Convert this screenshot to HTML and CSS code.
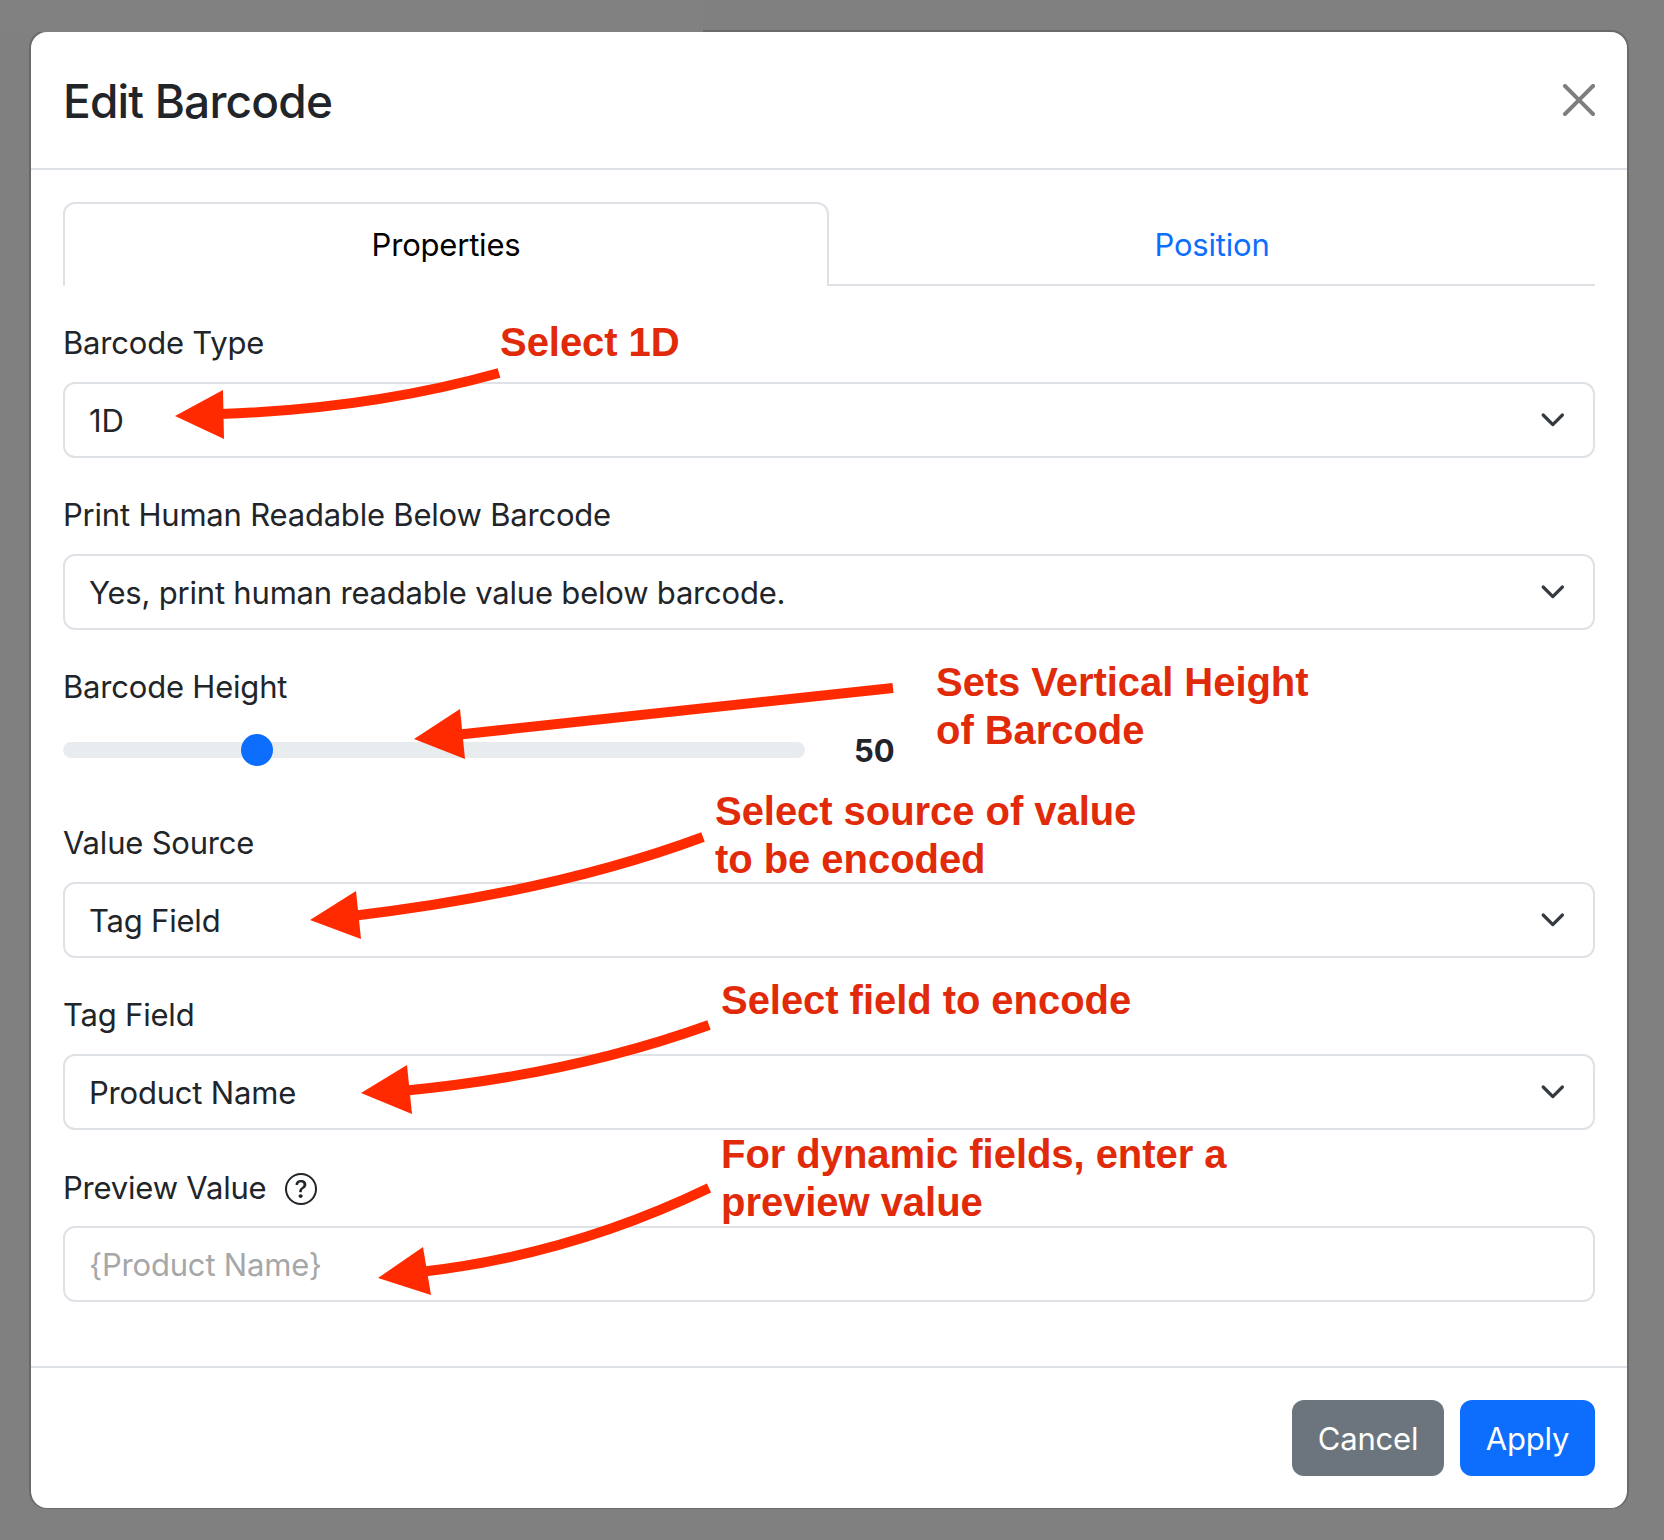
FILE: index.html
```html
<!DOCTYPE html>
<html lang="en">
<head>
<meta charset="utf-8">
<title>Edit Barcode</title>
<link rel="stylesheet" href="styles.css">
</head>
<body>
<div class="modal">
  <header class="modal-header">
    <h1 class="modal-title">Edit Barcode</h1>
    <svg class="close" viewBox="0 0 16 16" aria-label="Close"><path d="M.293.293a1 1 0 0 1 1.414 0L8 6.586 14.293.293a1 1 0 1 1 1.414 1.414L9.414 8l6.293 6.293a1 1 0 0 1-1.414 1.414L8 9.414l-6.293 6.293a1 1 0 0 1-1.414-1.414L6.586 8 .293 1.707a1 1 0 0 1 0-1.414z"/></svg>
  </header>
  <main class="modal-body">
    <nav class="tabs">
      <div class="tab tab-active">Properties</div>
      <div class="tab tab-link">Position</div>
    </nav>
    <div class="form">
      <div class="group">
        <label class="label">Barcode Type</label>
        <div class="select"><span>1D</span><svg class="chevron" viewBox="0 0 16 16"><path d="M2 5l6 6 6-6"/></svg></div>
      </div>
      <div class="group">
        <label class="label">Print Human Readable Below Barcode</label>
        <div class="select"><span>Yes, print human readable value below barcode.</span><svg class="chevron" viewBox="0 0 16 16"><path d="M2 5l6 6 6-6"/></svg></div>
      </div>
      <div class="group">
        <label class="label">Barcode Height</label>
        <div class="slider-row">
          <div class="track"><div class="thumb"></div></div>
          <output class="slider-value">50</output>
        </div>
      </div>
      <div class="group">
        <label class="label">Value Source</label>
        <div class="select"><span>Tag Field</span><svg class="chevron" viewBox="0 0 16 16"><path d="M2 5l6 6 6-6"/></svg></div>
      </div>
      <div class="group">
        <label class="label">Tag Field</label>
        <div class="select"><span>Product Name</span><svg class="chevron" viewBox="0 0 16 16"><path d="M2 5l6 6 6-6"/></svg></div>
      </div>
      <div class="group">
        <label class="label label-icon">Preview Value
          <svg class="help" viewBox="0 0 16 16"><path d="M8 15A7 7 0 1 1 8 1a7 7 0 0 1 0 14zm0 1A8 8 0 1 0 8 0a8 8 0 0 0 0 16z"/><path d="M5.255 5.786a.237.237 0 0 0 .241.247h.825c.138 0 .248-.113.266-.25.09-.656.54-1.134 1.342-1.134.686 0 1.314.343 1.314 1.168 0 .635-.374.927-.965 1.371-.673.489-1.206 1.06-1.168 1.987l.003.217a.25.25 0 0 0 .25.246h.811a.25.25 0 0 0 .25-.25v-.105c0-.718.273-.927 1.01-1.486.609-.463 1.244-.977 1.244-2.056 0-1.511-1.276-2.241-2.673-2.241-1.267 0-2.655.59-2.75 2.286zm1.557 5.763c0 .533.425.927 1.01.927.609 0 1.028-.394 1.028-.927 0-.552-.42-.94-1.029-.94-.584 0-1.009.388-1.009.94z"/></svg>
        </label>
        <input class="select input" type="text" placeholder="{Product Name}">
      </div>
    </div>
  </main>
  <footer class="modal-footer">
    <button class="btn btn-cancel">Cancel</button>
    <button class="btn btn-apply">Apply</button>
  </footer>
</div>
<div class="backdrop-card"></div>

<svg class="arrows" viewBox="0 0 1664 1540">
  <path class="shaft" d="M499 373Q370 409 220 414"/>
  <path class="head" d="M175 416L223 390L224 439Z"/>
  <path class="shaft" d="M893 688L455 735"/>
  <path class="head" d="M414 739L460 709L465 759Z"/>
  <path class="shaft" d="M703 837Q555 892 352 916"/>
  <path class="head" d="M310 920L356 891L361 939Z"/>
  <path class="shaft" d="M709 1025Q570 1075 402 1091"/>
  <path class="head" d="M361 1093L407 1065L412 1114Z"/>
  <path class="shaft" d="M709 1188Q570 1255 420 1272"/>
  <path class="head" d="M378 1278L423 1247L431 1295Z"/>
</svg>
<div class="note note-1">Select 1D</div>
<div class="note note-2">Sets Vertical Height<br>of Barcode</div>
<div class="note note-3">Select source of value<br>to be encoded</div>
<div class="note note-4">Select field to encode</div>
<div class="note note-5">For dynamic fields, enter a<br>preview value</div>
</body>
</html>
```
FILE: styles.css
```css
* { box-sizing: border-box; }
html, body { margin: 0; height: 1540px; }
body {
  position: relative;
  overflow: hidden;
  background: #808080;
  padding: 30px 0 0 29px;
  font-family: Inter, "Liberation Sans", sans-serif;
  font-size: 31px;
  letter-spacing: -.2px;
  color: #212529;
}
.backdrop-card {
  position: absolute;
  left: 0;
  top: 0;
  width: 703px;
  height: 32px;
  background: #818181;
}
.modal {
  position: relative;
  width: 1600px;
  height: 1479px;
  background: #fff;
  border: 2px solid #6a6a6a;
  border-bottom-width: 1px;
  border-radius: 18px;
  display: flex;
  flex-direction: column;
}
.modal-header {
  height: 138px;
  border-bottom: 2px solid #dee2e6;
  padding: 0 32px;
  display: flex;
  align-items: center;
  justify-content: space-between;
}
.modal-title {
  margin: 2px 0 0;
  font-size: 46px;
  font-weight: 500;
  letter-spacing: -.8px;
}
.close { width: 32px; height: 32px; fill: #000; opacity: .5; margin-top: -1px; }
.modal-body { flex: 1; padding: 32px 32px 0; }
.tabs {
  display: flex;
  height: 84px;
  border-bottom: 2px solid #dee2e6;
  margin-bottom: 32px;
}
.tab {
  flex: 1;
  display: flex;
  align-items: center;
  justify-content: center;
  padding-bottom: 2px;
  height: 84px;
}
.tab-active {
  flex: 0 0 766px;
  color: #000;
  background: #fff;
  border: 2px solid #dee2e6;
  border-bottom: 0;
  border-radius: 12px 12px 0 0;
}
.tab-link { color: #0d6efd; padding-top: 2px; }
.form { display: flex; flex-direction: column; gap: 32px; }
.label { display: block; height: 48px; line-height: 50px; margin-bottom: 16px; }
.label-icon { display: flex; align-items: center; padding-top: 3px; }
.help { width: 32px; height: 32px; fill: #212529; margin-left: 18px; margin-top: 2px; }
.select {
  display: flex;
  align-items: center;
  justify-content: space-between;
  width: 100%;
  height: 76px;
  padding: 0 27px 0 24px;
  background: #fff;
  border: 2px solid #dee2e6;
  border-radius: 12px;
  font: inherit;
  letter-spacing: inherit;
  color: #212529;
}
.input { outline: none; }
.input::placeholder { color: #a6a7a9; opacity: 1; }
.chevron { width: 25.6px; height: 25.6px; fill: none; stroke: #343a40; stroke-width: 2; stroke-linecap: round; stroke-linejoin: round; }
.slider-row { display: flex; align-items: center; height: 48px; margin-bottom: 12px; }
.track { position: relative; flex: 0 0 742px; height: 16px; border-radius: 8px; background: #e9ecef; }
.thumb { position: absolute; left: 178px; top: -8px; width: 32px; height: 32px; border-radius: 50%; background: #0d6efd; }
.slider-value { margin-left: 49px; font-weight: 700; letter-spacing: 0; }
.modal-footer {
  height: 142px;
  border-top: 2px solid #dee2e6;
  padding: 32px;
  display: flex;
  justify-content: flex-end;
  gap: 16px;
}
.btn {
  height: 76px;
  border: 0;
  border-radius: 12px;
  color: #fff;
  font: inherit;
  letter-spacing: inherit;
}
.btn-cancel { width: 152px; background: #6c757d; }
.btn-apply { width: 135px; background: #0d6efd; }
.arrows { position: absolute; left: 0; top: 0; width: 1664px; height: 1540px; pointer-events: none; }
.shaft { fill: none; stroke: #ff2a00; stroke-width: 10; }
.head { fill: #ff2a00; }
.note {
  position: absolute;
  font-family: "Liberation Sans", Arial, sans-serif;
  font-weight: 700;
  font-size: 40px;
  line-height: 48px;
  letter-spacing: -.05px;
  color: #e12a0a;
  white-space: nowrap;
}
.note-1 { left: 500px; top: 318px; }
.note-2 { left: 936px; top: 658px; }
.note-3 { left: 715px; top: 787px; }
.note-4 { left: 721px; top: 976px; }
.note-5 { left: 721px; top: 1130px; }
```
